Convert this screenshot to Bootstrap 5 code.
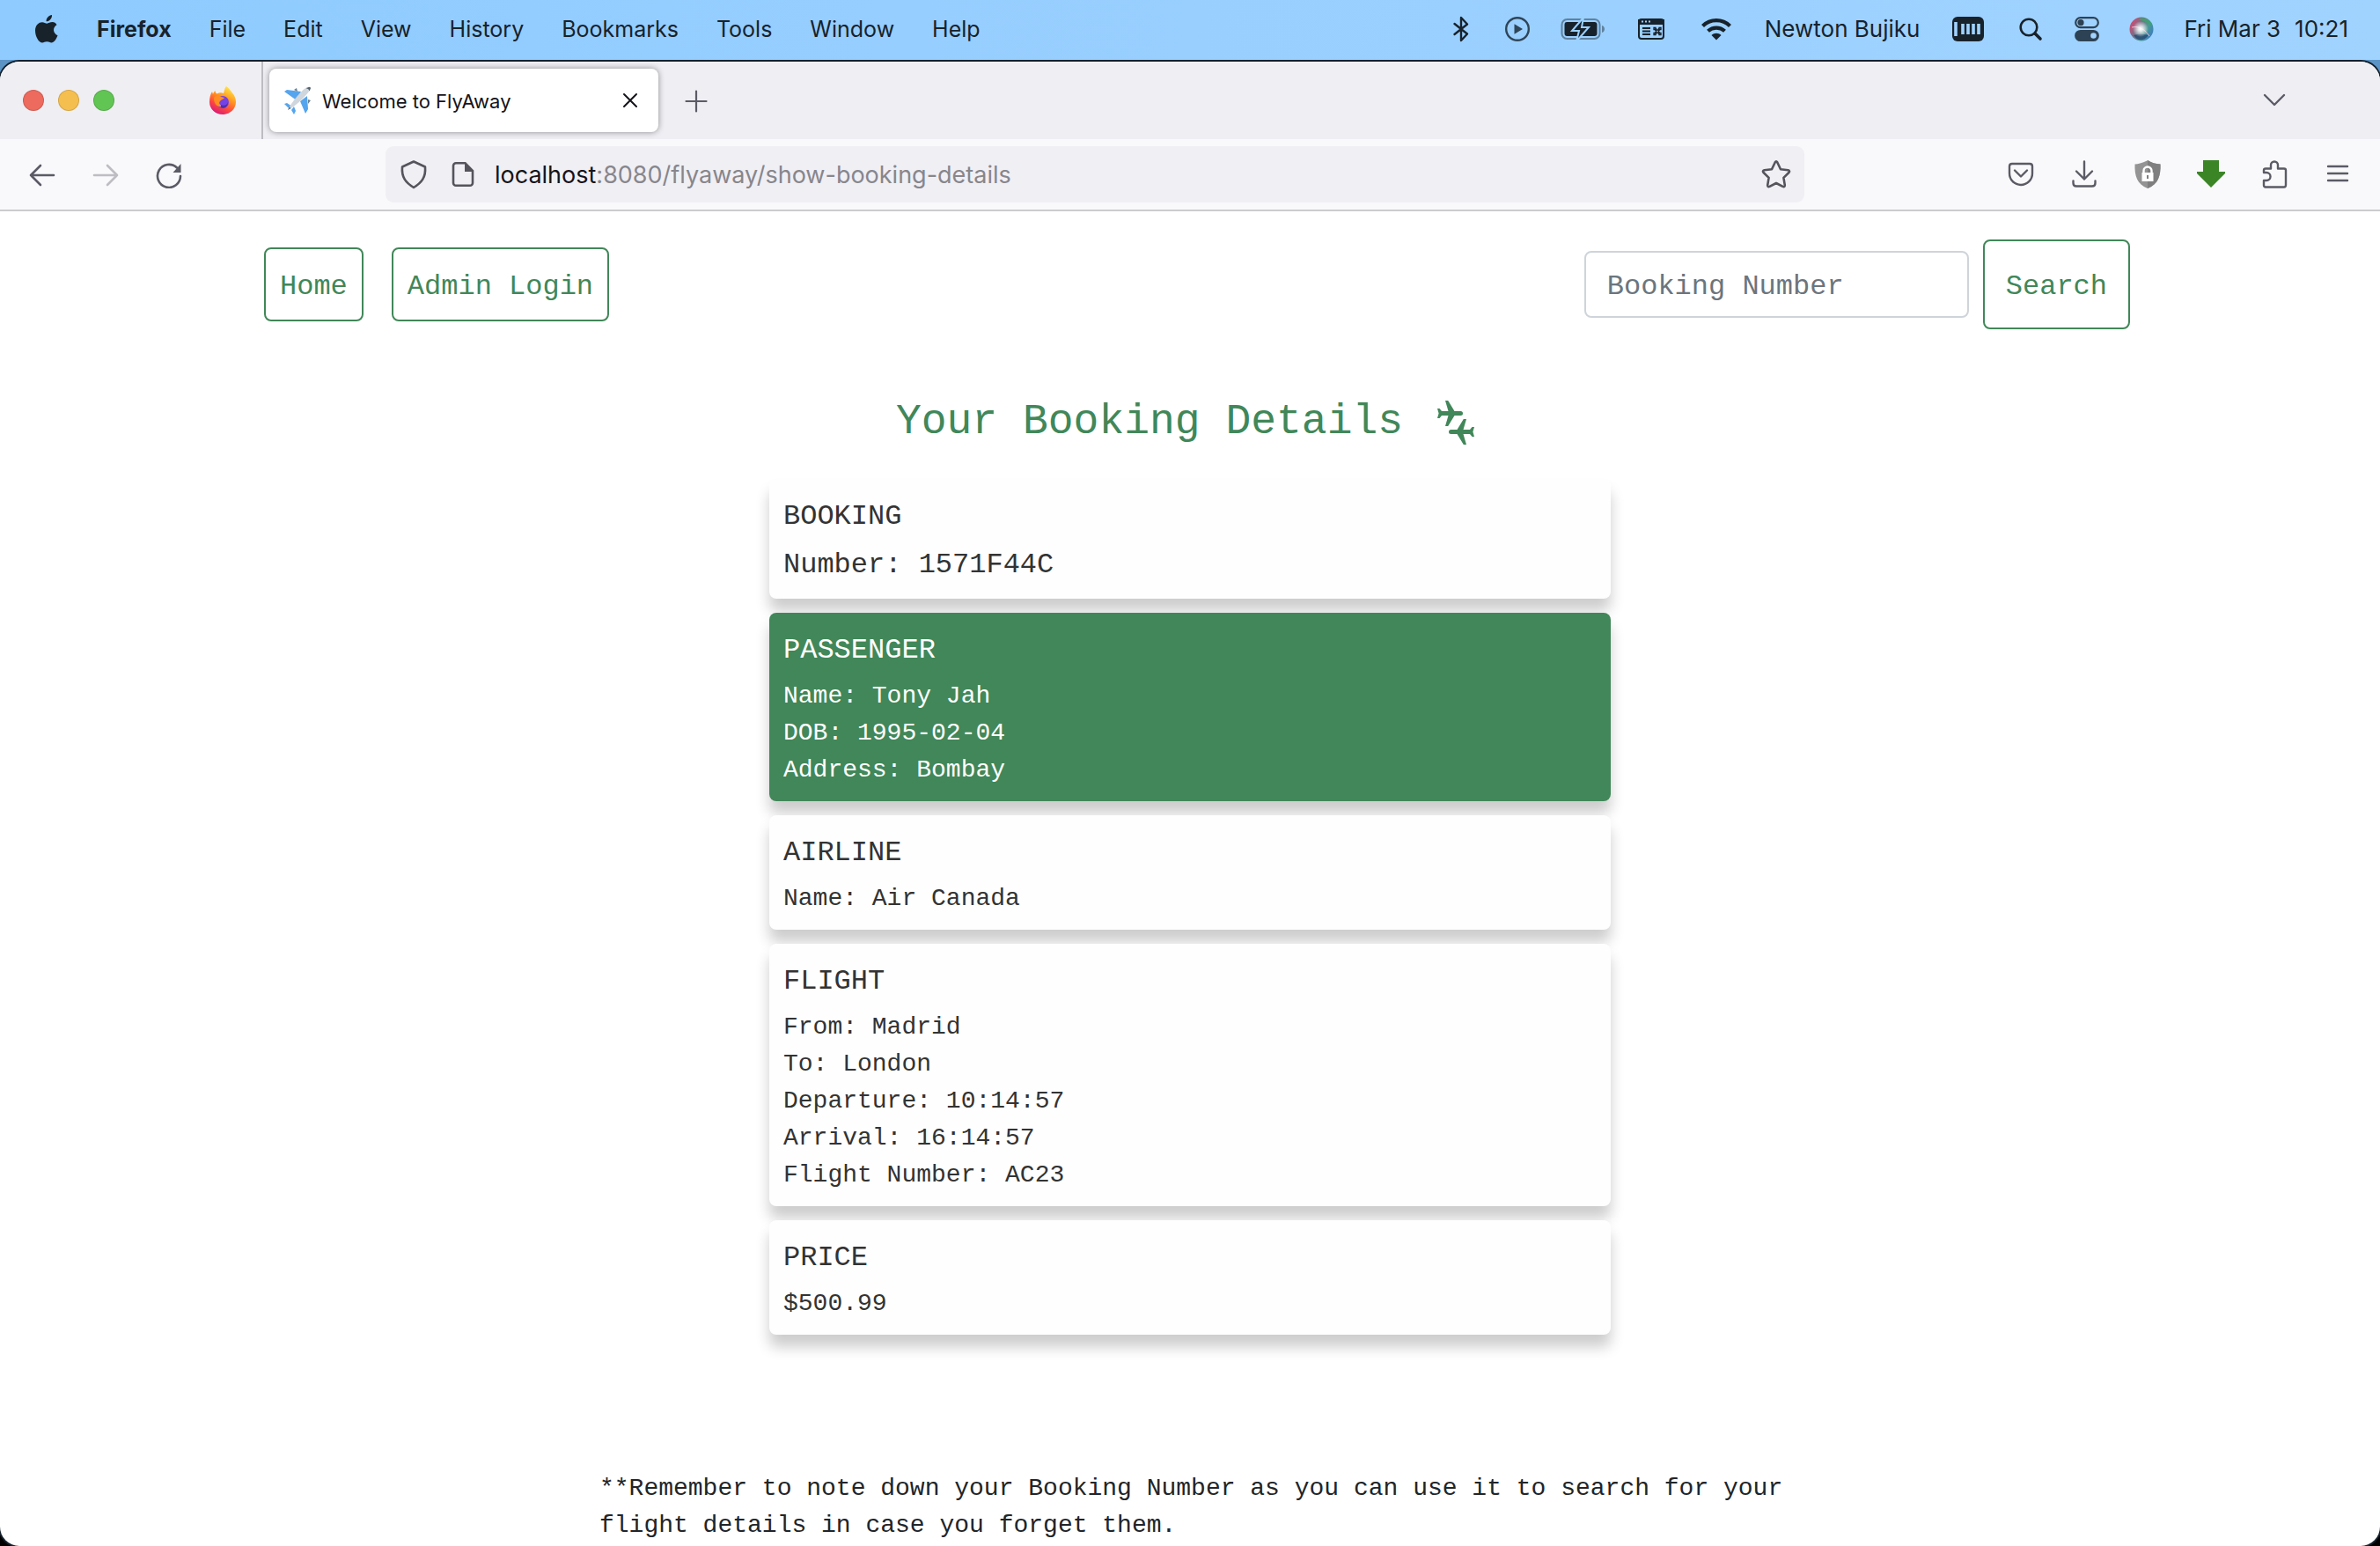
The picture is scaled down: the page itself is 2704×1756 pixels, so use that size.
<!DOCTYPE html>
<html lang="en">
<head>
<meta charset="utf-8">
<meta name="viewport" content="width=device-width, initial-scale=1">
<title>Welcome to FlyAway</title>
<link rel="stylesheet" href="https://cdn.jsdelivr.net/npm/bootstrap@5.3.0/dist/css/bootstrap.min.css">
<style>
:root { --fly: #418759; --ink: #18222b; --chrome: #5b5b66; }
body { font-family: Inter, "Liberation Sans", sans-serif; background: linear-gradient(#5b93c4, #5b93c4 120px, #000 160px); overflow-x: hidden; }
svg { display: block; flex: none; fill: none; }
.menubar { height: 68px; background: linear-gradient(90deg, #8fcbff, #a1d3ff); color: var(--ink); font-size: 25px; line-height: 32px; padding: 2px 36px 4px 39px; }
.menubar a { color: inherit; text-decoration: none; }
.menus { gap: 43px; }
.status { gap: 34px; font-size: 26px; }
.browser { background: #fff; border-radius: 22px; box-shadow: 0 0 0 2px #14202c; margin-top: 2px; overflow: hidden; color: #15141a; }
.tabstrip { height: 88px; background: #efeef3; padding-right: 104px; color: var(--chrome); }
.lights { gap: 16px; padding-left: 26px; width: 299px; padding-right: 28px; border-right: 2px solid #bdbcc2; }
.light { width: 24px; height: 24px; border-radius: 50%; border: 1px solid #0002; }
.red { background: #ed6a5e; } .amber { background: #f5bf4f; } .green { background: #61c554; }
.tabcard { width: 442px; height: 72px; margin-left: 7px; padding: 0 20px 0 16px; background: #fff; border-radius: 8px; box-shadow: 0 0 7px #0000006b; font-size: 22px; gap: 12px; color: #15141a; }
.tabcard span { padding-top: 3px; }
.plain { border: 0; background: none; padding: 0; color: inherit; }
.toolbar { height: 82px; background: #f9f9fb; border-bottom: 2px solid #cccccf; padding: 0 32px; color: var(--chrome); }
.tools { gap: 40px; }
.urlbar { height: 64px; margin: 0 230px; padding: 0 14px 0 16px; background: #f0eff4; border-radius: 9px; gap: 24px; }
.address { font-size: 27px; color: #87868c; outline: 0; margin-left: -4px; padding-top: 2px; }
.address b { font-weight: 400; color: #15141a; }
.site { font-family: "Liberation Mono", monospace; font-size: 28px; line-height: 42px; color: #212529; }
.topnav { max-width: 2136px; padding: 32px 0 0 16px; font-size: 32px; line-height: 44px; }
.topnav .btn { --bs-btn-color: var(--fly); --bs-btn-border-color: var(--fly); --bs-btn-hover-bg: var(--fly); --bs-btn-border-width: 2px; --bs-btn-border-radius: 8px; --bs-btn-font-size: 32px; --bs-btn-line-height: 44px; font-family: inherit; }
.nav-links { gap: 32px; }
.link-btn { padding: 21px 16px 15px; }
.find-btn { padding: 30px 24px 24px; }
.find-box { width: 437px; height: 76px; font: inherit; border: 2px solid #ced4da; border-radius: 8px; padding: 16px 24px 12px; }
.find-box::placeholder { color: #6c757d; }
.page-title { font-size: 48px; line-height: 58px; color: var(--fly); margin: 76px 0 36px; gap: 28px; font-weight: 400; }
.details { width: 956px; gap: 16px; }
.info { padding: 23px 16px 14px; border: 0; border-radius: 8px; color: #333; background: #fefefe; box-shadow: 0 14px 16px #0003; }
.info h2 { font-size: 32px; line-height: 40px; margin: 0 0 11px; font-weight: 400; }
.info .code { font-size: 32px; line-height: 40px; padding: 4px 0; }
.info p { margin: 0; }
.info.solid { background: var(--fly); color: #fff; }
.note { max-width: 1352px; padding-left: 5px; margin: 154px auto 0; }
</style>
<script src="https://cdn.jsdelivr.net/npm/bootstrap@5.3.0/dist/js/bootstrap.bundle.min.js"></script>
</head>
<body class="min-vh-100 d-flex flex-column">
<header class="menubar d-flex justify-content-between align-items-center text-nowrap">
  <nav class="menus d-flex align-items-center" aria-label="Application menu">
    <svg width="28" height="34" viewBox="0 0 28 34" fill="none"><path fill="#18222b" d="M20 1c.3 3.800-2.800 7.400-6.400 7.300C13.200 4.800 16.500 1.300 20 1zM25.500 12.200c-5.200 3.200-4.300 9.700 1 12-1.500 4.300-4.200 8.300-7 8.300-2 0-2.700-1.200-5.200-1.200s-3.300 1.200-5.200 1.200C5 32.500 1 25.500 1 18.800c0-6.300 4-9.600 7.900-9.600 2.200 0 4 1.500 5.500 1.500 1.400 0 3.500-1.600 6.200-1.600 2 0 3.800 1.100 4.900 3.100z"/></svg>
    <a href="#" class="fw-bold">Firefox</a><a href="#">File</a><a href="#">Edit</a><a href="#">View</a><a href="#">History</a><a href="#">Bookmarks</a><a href="#">Tools</a><a href="#">Window</a><a href="#">Help</a>
  </nav>
  <div class="status d-flex align-items-center">
    <svg width="30" height="30" viewBox="0 0 30 30" stroke="#18222b" stroke-width="2.400" stroke-linejoin="round" stroke-linecap="round"><path d="M7.500 9 22 20.500 15 28V2l7 7.500L7.500 21"/></svg>
    <svg width="30" height="30" viewBox="0 0 30 30"><circle cx="15" cy="15" r="12.800" stroke="#2f4558" stroke-width="2.400"/><path fill="#2f4558" d="M11.500 9.200v11.600l9.500-5.800z"/></svg>
    <svg width="50" height="28" viewBox="0 0 50 28"><rect x="1.500" y="3" width="43" height="22" rx="6" stroke="#5f829f" stroke-width="2"/><rect x="4.500" y="6" width="37" height="16" rx="3" fill="#18222b"/><path fill="#5f829f" d="M47 10c4 1 4 7 0 8z"/><path fill="#18222b" stroke="#9bd1ff" stroke-width="2" d="M26 1 13 16h8l-3 12L32 12h-8z"/></svg>
    <svg width="38" height="28" viewBox="0 0 38 28" stroke="#18222b" stroke-width="2"><rect x="5" y="3" width="28" height="22" rx="3"/><path fill="#18222b" d="M5 4h28v4H5z"/><path stroke="#9bd1ff" stroke-dasharray="2 2" d="M8 5.500h10"/><path d="M9 13h9M9 16.500h9M9 20h9"/><path stroke-width="1.500" d="M23 15h6M23 18h6M24.500 13v7M27.500 13v7"/><path stroke-width="1.300" d="M22 12.500h2v2h-2zM28 12.500h2v2h-2zM22 18.500h2v2h-2zM28 18.500h2v2h-2z"/></svg>
    <svg width="42" height="28" viewBox="0 0 42 28" stroke="#18222b" stroke-width="4.200"><path d="M5.500 10.500c8.500-8.500 22.500-8.500 31 0M11.500 16.300c5.500-5 13.500-5 19 0"/><path stroke="none" fill="#18222b" d="M15.500 21c3-3 8-3 11 0L21 26.500z"/></svg>
    <span>Newton Bujiku</span>
    <svg width="42" height="30" viewBox="0 0 42 30"><rect x="3" y="1" width="36" height="28" rx="6" fill="#18222b"/><path stroke="#a0d3ff" stroke-width="3.600" d="M7 7v16M15 9v12M21 9v12M27 9v12M33 9v12"/></svg>
    <svg width="32" height="30" viewBox="0 0 32 30" stroke="#18222b"><circle cx="14" cy="13" r="9.300" stroke-width="2.600"/><path stroke-width="3.600" stroke-linecap="round" d="m21 20 6 6"/></svg>
    <svg width="28" height="30" viewBox="0 0 28 30" stroke="#2d4254" stroke-width="2.200"><rect x="1.200" y="2.200" width="25.600" height="11" rx="5.500"/><circle cx="7" cy="7.700" r="2.500" fill="#2d4254"/><rect x="1.200" y="17" width="25.600" height="11" rx="5.500" fill="#2d4254"/><circle cx="21.500" cy="22.500" r="3.300" fill="#a0d3ff" stroke="none"/></svg>
    <svg width="28" height="30" viewBox="0 0 28 30"><defs><linearGradient id="orb" x1="0" y1=".2" x2="1" y2=".8"><stop stop-color="#e0446f"/><stop offset=".35" stop-color="#7c6d86"/><stop offset=".65" stop-color="#4a9a93"/><stop offset="1" stop-color="#3a78c8"/></linearGradient><radialGradient id="glow"><stop stop-color="#fff"/><stop offset=".3" stop-color="#fff" stop-opacity=".8"/><stop offset="1" stop-color="#fff" stop-opacity="0"/></radialGradient></defs><circle cx="14" cy="15" r="13.500" fill="url(#orb)"/><path fill="#38a66f" opacity=".8" d="M10 4c7-4 15 1 16 8-5-5-10-6-16-8z"/><path fill="#233c6c" opacity=".7" d="M5 22c6-2 12-1 17 0-5 7-13 7-17 0z"/><path stroke="#f6b5d2" d="M3 13c9-2 15 3 20 10"/><circle cx="13" cy="15" r="9" fill="url(#glow)"/></svg>
    <span class="d-flex gap-3"><span>Fri Mar 3</span><span>10:21</span></span>
  </div>
</header>

<div class="browser flex-grow-1">
  <div class="tabstrip d-flex align-items-center">
    <div class="lights d-flex align-items-center h-100">
      <span class="light red"></span><span class="light amber"></span><span class="light green"></span>
      <svg class="ms-auto" width="32" height="32" viewBox="0 0 32 32"><defs><linearGradient id="fox" x1=".8" y1="0" x2=".3" y2="1"><stop stop-color="#fff14f"/><stop offset=".4" stop-color="#ff9a1f"/><stop offset=".7" stop-color="#ff4a3d"/><stop offset="1" stop-color="#d9177a"/></linearGradient></defs><path fill="url(#fox)" d="M20 0c4 3 5 5 6.500 7 3 3 4.500 7 4.500 11 0 8-7 14-15 14S1 26 1 18C1 13 2 9 4 6l1 3c.5-2 1.500-3 2.500-4 0 2 1 3 2 3.500C12 7 15 7 17 8c1-3 1-6 3-8z"/><circle cx="16" cy="18" r="7" fill="#7542e5"/><path fill="#ff8d22" d="M6 13c3-3 6-3 8-1l4 1c-1 2-4 2-5 4-2 2 0 5 3 5-5 3-10-1-10-9z"/><path fill="#4a2fb0" d="M14 21c4 2 7 0 8-3 0 5-4 8-8 6z"/></svg>
    </div>
    <div class="tabcard d-flex align-items-center">
      <svg width="32" height="32" viewBox="0 0 32 32"><path fill="#55a5ee" d="M1 6 4 4l16 2-5 10zM27 11l1 15-3 5-6-14zM1 20l3-1 6 4-2 3-3-2zM9 27l3-4 2 5-2 4z"/><path fill="#6b7f90" d="m12 4 3-2 1 4zM28 15l3 1-3 4z"/><path fill="#cfd6dc" d="M5 27C8 20 20 5 26 1.500c2-1.200 5-1.500 5 .5 0 4-17 21-26 25z"/><path fill="#52606b" d="M26 2.500c2 0 3 1 3.500 3L31 2c-.5-1.500-3-1-5 .5zM5 27l2-4 1 2z"/></svg>
      <span>Welcome to FlyAway</span>
      <button class="plain ms-auto" aria-label="Close tab"><svg width="24" height="24" viewBox="0 0 24 24" stroke="#15141a" stroke-width="2" stroke-linecap="round"><path d="m5 5 14 14M19 5 5 19"/></svg></button>
    </div>
    <button class="plain ms-4" aria-label="New tab"><svg width="38" height="32" viewBox="0 0 38 32" stroke="currentColor" stroke-width="2.200" stroke-linecap="round"><path d="M19 5.500v23M7.500 17h23"/></svg></button>
    <button class="plain ms-auto" aria-label="List all tabs"><svg width="32" height="32" viewBox="0 0 32 32" stroke="currentColor" stroke-width="2.400" stroke-linecap="round" stroke-linejoin="round"><path d="m5 10 11 11 11-11"/></svg></button>
  </div>
  <div class="toolbar d-flex align-items-center">
    <div class="tools d-flex">
      <button class="plain" aria-label="Back"><svg width="32" height="32" viewBox="0 0 32 32" stroke="currentColor" stroke-width="2.600" stroke-linecap="round" stroke-linejoin="round"><path d="M29 17H3M14 6 3 17l11 11"/></svg></button>
      <button class="plain" aria-label="Forward"><svg width="32" height="32" viewBox="0 0 32 32" stroke="#bebdc2" stroke-width="2.600" stroke-linecap="round" stroke-linejoin="round"><path d="M3 17h26M18 6l11 11-11 11"/></svg></button>
      <button class="plain" aria-label="Reload"><svg width="32" height="32" viewBox="0 0 32 32" stroke="currentColor" stroke-width="2.600" stroke-linecap="round"><path d="M29 18a13 13 0 1 1-4-9.500"/><path fill="currentColor" stroke="none" d="M29.500 4v10h-9z"/></svg></button>
    </div>
    <div class="urlbar d-flex align-items-center flex-grow-1">
      <svg width="32" height="34" viewBox="0 0 32 34" stroke="#55545c" stroke-width="2.600" stroke-linejoin="round"><path d="M16 2.500 29 8.500c1 12-4 18-13 23.500C7 26.500 2 20.500 3 8.500z"/></svg>
      <svg width="32" height="32" viewBox="0 0 32 32" stroke="#55545c" stroke-width="2.600"><path d="M18.500 3.300H8a3 3 0 0 0-3 3v19.400a3 3 0 0 0 3 3h16a3 3 0 0 0 3-3V12z"/><path fill="#55545c" stroke="none" d="M18 2v11h10z"/></svg>
      <div class="address" role="textbox" contenteditable="true" spellcheck="false" aria-label="Address"><b>localhost</b>:8080/flyaway/show-booking-details</div>
      <button class="plain ms-auto" aria-label="Bookmark this page"><svg width="36" height="34" viewBox="0 0 36 34" stroke="#55545c" stroke-width="2.600" stroke-linejoin="round"><path d="M16.800 3.200q1.200-2 2.400 0l3.800 8.100 8.500 1q2.500.7.900 2.700l-6 5.900 1.400 8.400q0 2.500-2.300 1.600L18 27l-7.500 3.900q-2.300.9-2.300-1.600l1.400-8.400-6-5.900q-1.600-2 .9-2.700l8.500-1z"/></svg></button>
    </div>
    <div class="tools d-flex">
      <button class="plain" aria-label="Save to Pocket"><svg width="32" height="32" viewBox="0 0 32 32" stroke="currentColor" stroke-width="2.400" stroke-linecap="round" stroke-linejoin="round"><path d="M6 4h20q3 0 3 3v8a13 13 0 0 1-26 0V7q0-3 3-3z"/><path d="m9 11.500 7 7 7-7"/></svg></button>
      <button class="plain" aria-label="Downloads"><svg width="32" height="32" viewBox="0 0 32 32" stroke="currentColor" stroke-width="2.400" stroke-linecap="round" stroke-linejoin="round"><path d="M16 1.500v20M7 12.500l9 9 9-9M3.500 23.500V26q0 3.500 3.500 3.500h18q3.500 0 3.500-3.500v-2.500"/></svg></button>
      <button class="plain" aria-label="Password shield"><svg width="32" height="32" viewBox="0 0 32 32"><path fill="#949494" d="M16 0q6 4 14.500 4.500C31 18 28 27 16 32 4 27 1 18 1.500 4.500 10 4 16 0 16 0z"/><path fill="#7f7f7f" d="M16 0q6 4 14.500 4.500C31 18 28 27 16 32z"/><path stroke="#fff" stroke-width="2.400" d="M11.500 15v-3a4.500 4.500 0 0 1 9 0v3"/><path fill="#fff" d="M9.500 14h13v10h-13z"/><path stroke="#7f7f7f" stroke-width="2" d="M16 17v4"/></svg></button>
      <button class="plain" aria-label="Download helper"><svg width="32" height="32" viewBox="0 0 32 32"><path fill="#3b8527" d="M7 0h18v13h7v2L16 31 0 15v-2h7z"/></svg></button>
      <button class="plain" aria-label="Extensions"><svg width="32" height="32" viewBox="0 0 32 32" stroke="currentColor" stroke-width="2.400" stroke-linejoin="round"><path d="M4 14v-2.500q0-2 2-2h6V5.500a4 4 0 0 1 8 0v4h7q2 0 2 2V28q0 2.500-2 2.500H6q-2 0-2-2V23h3a4.500 4.500 0 0 0 0-9z"/></svg></button>
      <button class="plain" aria-label="Open menu"><svg width="32" height="32" viewBox="0 0 32 32" stroke="currentColor" stroke-width="2.400" stroke-linecap="round"><path d="M5 7h22M5 15h22M5 23h22"/></svg></button>
    </div>
  </div>

  <main class="site">
    <nav class="topnav mx-auto d-flex justify-content-between align-items-center">
      <div class="nav-links d-flex">
        <a class="btn btn-outline-success link-btn" href="#">Home</a>
        <a class="btn btn-outline-success link-btn" href="#">Admin Login</a>
      </div>
      <form class="d-flex align-items-center gap-3">
        <input class="form-control find-box" type="search" placeholder="Booking Number" aria-label="Booking Number">
        <button class="btn btn-outline-success find-btn" type="button">Search</button>
      </form>
    </nav>
    <h1 class="page-title d-flex justify-content-center align-items-center">Your Booking Details
      <svg width="64" height="58" viewBox="0 0 64 58" fill="none"><g fill="#418759"><path id="jet" d="M20 5h3.200L30.500 17H37.500a2.500 2.500 0 0 1 0 5H30.500L23.200 34H20L23.500 22H16L13.500 25H11L12.600 19.500 11 14H13.500L16 17H23.500z"/><use href="#jet" transform="rotate(180 32 30)"/></g></svg>
    </h1>
    <div class="details mx-auto d-flex flex-column">
      <section class="card info"><h2>BOOKING</h2><p class="code">Number: 1571F44C</p></section>
      <section class="card info solid"><h2>PASSENGER</h2><p>Name: Tony Jah</p><p>DOB: 1995-02-04</p><p>Address: Bombay</p></section>
      <section class="card info"><h2>AIRLINE</h2><p>Name: Air Canada</p></section>
      <section class="card info"><h2>FLIGHT</h2><p>From: Madrid</p><p>To: London</p><p>Departure: 10:14:57</p><p>Arrival: 16:14:57</p><p>Flight Number: AC23</p></section>
      <section class="card info"><h2>PRICE</h2><p>$500.99</p></section>
    </div>
    <p class="note">**Remember to note down your Booking Number as you can use it to search for your flight details in case you forget them.</p>
  </main>
</div>
</body>
</html>
